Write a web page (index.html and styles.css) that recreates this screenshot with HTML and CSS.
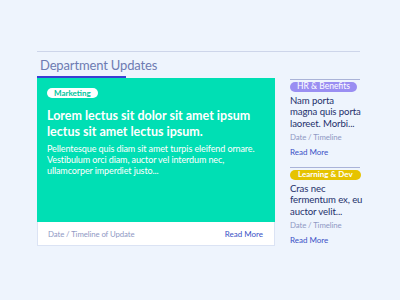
FILE: index.html
```html
<!DOCTYPE html>
<html>
<head>
<meta charset="utf-8">
<link rel="stylesheet" href="styles.css">
</head>
<body>
<section class="updates">
  <header class="head"><h1 class="title">Department Updates</h1></header>
  <div class="grid">
    <article class="main">
      <div class="main-body">
        <span class="pill pill-white">Marketing</span>
        <h2 class="headline">Lorem lectus sit dolor sit amet ipsum lectus sit amet lectus ipsum.</h2>
        <p class="excerpt">Pellentesque quis diam sit amet turpis eleifend ornare. Vestibulum orci diam, auctor vel interdum nec, ullamcorper imperdiet justo...</p>
      </div>
      <footer class="main-foot">
        <span class="date">Date / Timeline of Update</span>
        <a class="more">Read More</a>
      </footer>
    </article>
    <div class="side">
      <article class="item">
        <span class="pill pill-purple">HR &amp; Benefits</span>
        <h3 class="item-title">Nam porta<br>magna quis porta<br>laoreet. Morbi...</h3>
        <span class="date">Date / Timeline</span>
        <a class="more">Read More</a>
      </article>
      <article class="item">
        <span class="pill pill-yellow">Learning &amp; Dev</span>
        <h3 class="item-title">Cras nec<br>fermentum ex, eu<br>auctor velit...</h3>
        <span class="date">Date / Timeline</span>
        <a class="more">Read More</a>
      </article>
    </div>
  </div>
</section>
</body>
</html>
```
FILE: styles.css
```css
* { box-sizing: border-box; margin: 0; padding: 0; }
body {
  background: #eef4fd;
  font-family: Lato, "Noto Sans", sans-serif;
  width: 400px;
  height: 300px;
  overflow: hidden;
}
.updates {
  margin: 51px 0 0 37px;
  width: 323px;
}
.head {
  border-top: 1px solid #cdd5ea;
  display: flex;
}
.title {
  font-size: 13px;
  letter-spacing: -0.15px;
  font-weight: 400;
  color: #6d7bb2;
  line-height: 18px;
  padding: 4px 0 2px 3px;
  width: 89px;
  white-space: nowrap;
  border-bottom: 2px solid #3a3fd4;
}
.grid {
  display: flex;
  gap: 15px;
  align-items: flex-start;
}
.main {
  width: 238px;
  background: #fff;
  border: 1px solid #dbe3f4;
  border-top: 0;
}
.main-body {
  background: #00dfb4;
  height: 144px;
  margin: 0 -1px;
  padding: 10px 12px 0 10px;
  color: #fff;
  display: flex;
  flex-direction: column;
  align-items: flex-start;
}
.pill {
  display: block;
  font-size: 8px;
  line-height: 10px;
  height: 10px;
  padding: 0 6px;
  border-radius: 6px;
  font-weight: 700;
  white-space: nowrap;
}
.pill-white { background: #fff; color: #00c49c; padding: 0 7px; }
.pill-purple { background: #9a8ef2; color: #fff; font-weight: 400; font-size: 8.5px; padding: 0 7px; }
.pill-yellow { background: #e6c300; color: #fff; padding: 0 8px; }
.item .pill { height: 9.5px; line-height: 9.5px; }
.headline {
  font-size: 12.5px;
  font-weight: 700;
  line-height: 16px;
  margin-top: 10px;
}
.excerpt {
  font-size: 9px;
  letter-spacing: -0.1px;
  line-height: 11px;
  margin-top: 3px;
}
.main-foot {
  height: 23px;
  display: flex;
  justify-content: space-between;
  align-items: center;
  padding: 0 11px 0 10px;
}
.date {
  font-size: 7.8px;
  letter-spacing: -0.1px;
  color: #8f99c4;
}
.more {
  font-size: 8px;
  color: #3a52c6;
}
.side {
  width: 70px;
  padding-top: 1px;
}
.item {
  border-top: 1px solid #aab3d8;
  padding-top: 2px;
  height: 88px;
  display: flex;
  flex-direction: column;
  align-items: flex-start;
}
.item-title {
  font-size: 9.6px;
  letter-spacing: -0.1px;
  font-weight: 400;
  line-height: 11.6px;
  color: #24306b;
  margin-top: 3px;
  white-space: nowrap;
}
.item .date { margin-top: 4px; line-height: 9px; }
.item .more { margin-top: 6px; line-height: 9px; }
```
